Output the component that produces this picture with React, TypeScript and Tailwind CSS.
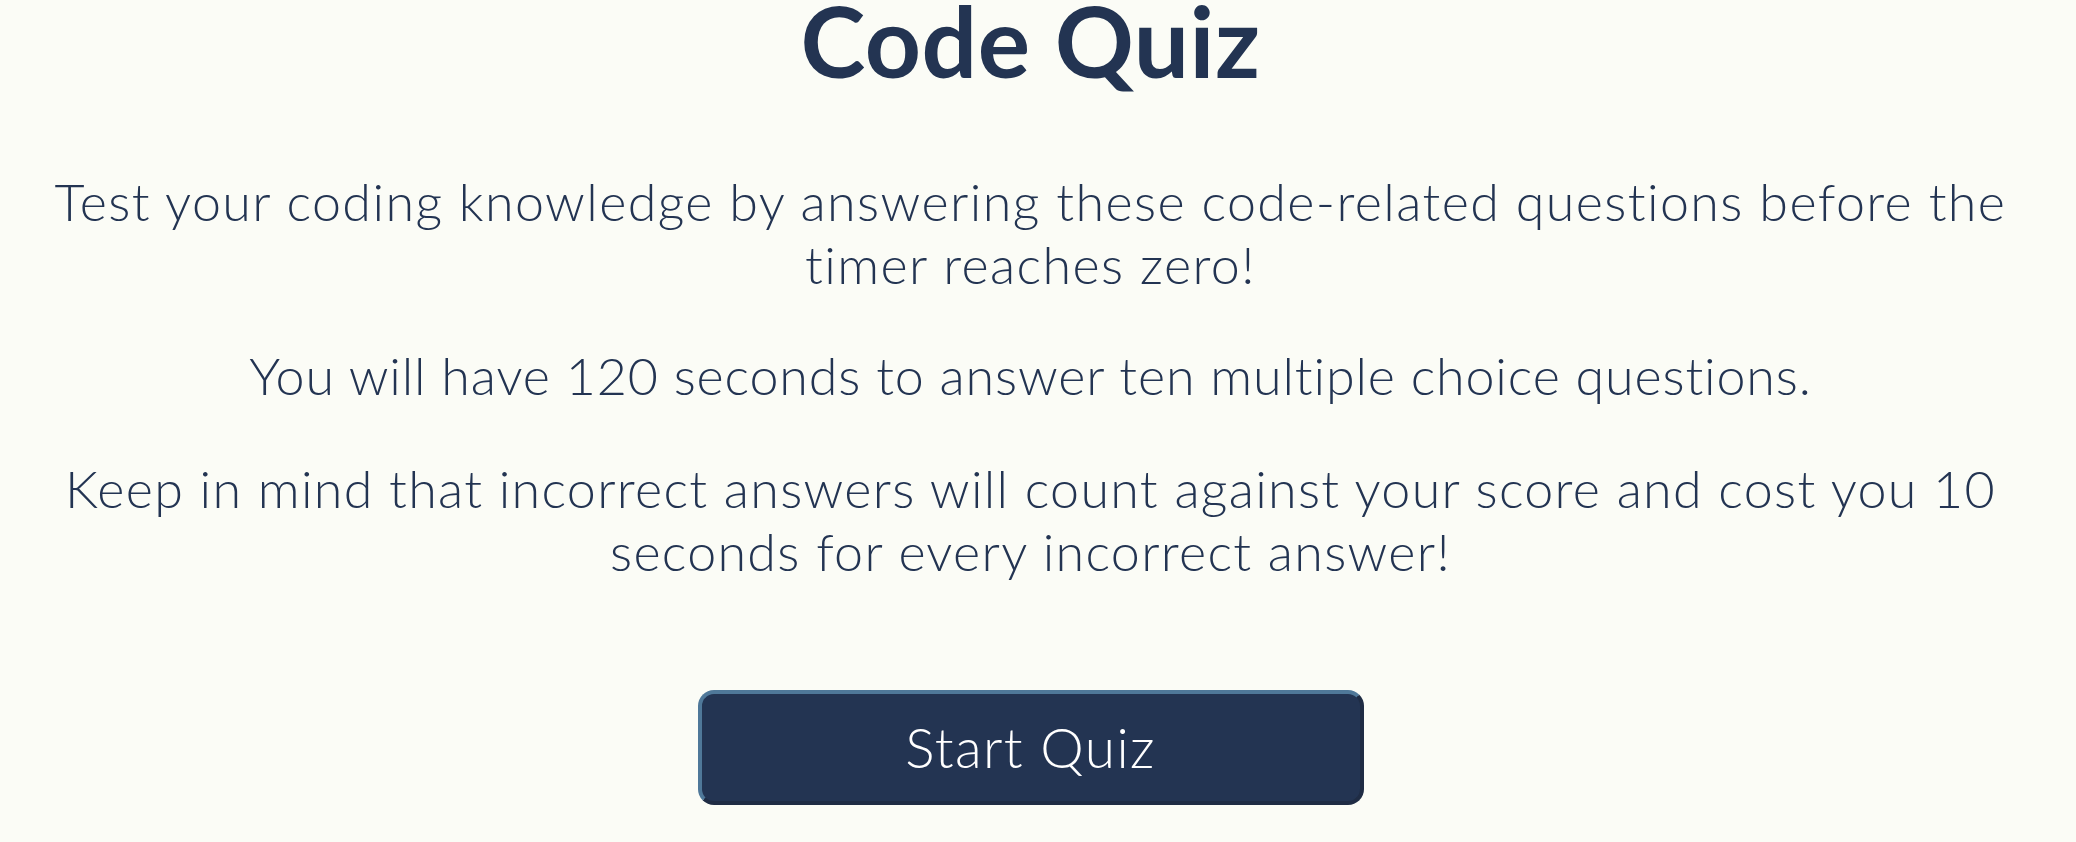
export default function App() {
  return (
    <div className="min-h-[842px] w-full bg-[#fbfcf6] text-[#233452] font-['Lato','Noto_Sans',sans-serif]">
      <div className="flex flex-col items-center pr-[15px] text-center">
        <h1 className="text-[98px] leading-[80px] font-bold tracking-[0.5px]">Code Quiz</h1>

        <p className="mt-[90px] text-[52px] leading-[63px] font-light tracking-[1.4px]">
          Test your coding knowledge by answering these code-related questions before the
          <br />
          timer reaches zero!
        </p>

        <p className="mt-[48px] text-[52px] leading-[63px] font-light tracking-[0.85px]">
          You will have 120 seconds to answer ten multiple choice questions.
        </p>

        <p className="mt-[50px] text-[52px] leading-[63px] font-light tracking-[1.3px]">
          Keep in mind that incorrect answers will count against your score and cost you 10
          <br />
          seconds for every incorrect answer!
        </p>

        <button className="mt-[107px] flex h-[115px] w-[666px] items-center justify-center rounded-[16px] border-4 border-t-[#4f7899] border-l-[#4f7899] border-r-[#1f2c44] border-b-[#1f2c44] bg-[#233452] text-[55px] font-light tracking-[1.4px] text-white">
          Start Quiz
        </button>
      </div>
    </div>
  )
}
